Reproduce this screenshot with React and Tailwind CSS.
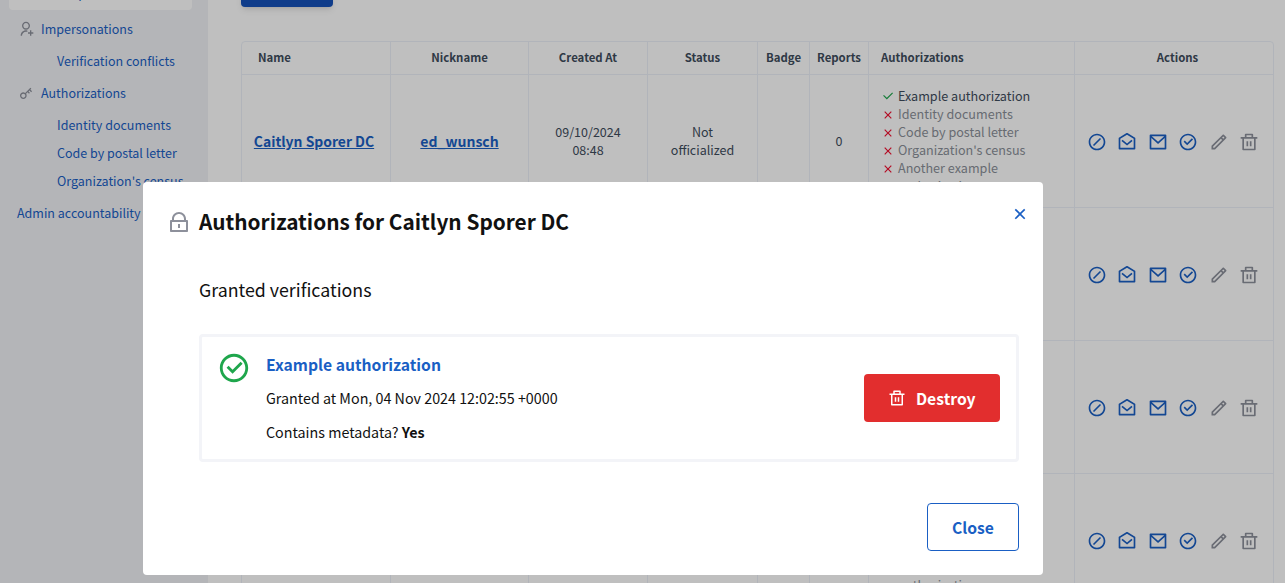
import React from 'react';
import {
  RiCheckLine,
  RiCheckboxCircleLine,
  RiCloseLine,
  RiDeleteBinLine,
  RiForbid2Line,
  RiGroupLine,
  RiKey2Line,
  RiLockLine,
  RiMailLine,
  RiMailOpenLine,
  RiPencilLine,
  RiUserAddLine,
} from 'react-icons/ri';

const font = { fontFamily: '"Noto Sans CJK SC", "Noto Sans", sans-serif' };

const columns = 'grid grid-cols-[149px_138px_119px_110px_52px_59px_206px_199px]';
const cell = 'flex items-center justify-center border-r border-[#edf1f9] text-center text-[12.5px] text-[#3e4c5c]';

const headers = ['Name', 'Nickname', 'Created At', 'Status', 'Badge', 'Reports', 'Authorizations', 'Actions'];
const denied = ['Identity documents', 'Code by postal letter', "Organization's census", 'Another example authorization'];

const Row = () => (
  <div className={`${columns} h-[133px] border-t border-[#edf1f9]`}>
    <div className={`${cell} pr-[4px]`}>
      <a className="text-[13.9px] font-semibold text-[#1a5fc4] underline">Caitlyn Sporer DC</a>
    </div>
    <div className={cell}>
      <a className="text-[14px] font-semibold text-[#1a5fc4] underline">ed_wunsch</a>
    </div>
    <div className={`${cell} leading-[18px]`}>09/10/2024<br />08:48</div>
    <div className={`${cell} leading-[18px]`}>Not<br />officialized</div>
    <div className={cell}></div>
    <div className={cell}>0</div>
    <div className="flex flex-col justify-center border-r border-[#edf1f9] pl-3 pr-1 text-[12.6px] leading-[18px]">
      <div className="flex items-center gap-[3px] text-[#3e4c5c]">
        <RiCheckLine className="h-[14px] w-[14px] shrink-0 text-[#1fa64c]" />
        Example authorization
      </div>
      {denied.map((name) => (
        <div key={name} className="flex items-start gap-[3px] text-[#8a8f98]">
          <RiCloseLine className="mt-[3px] h-[14px] w-[14px] shrink-0 text-[#f01030]" />
          {name}
        </div>
      ))}
    </div>
    <div className="flex items-center justify-center gap-[10.6px] pr-[3px] pt-[1px] text-[20px]">
      <RiForbid2Line className="text-[#1a5fc4]" />
      <RiMailOpenLine className="text-[#1a5fc4]" />
      <RiMailLine className="text-[#1a5fc4]" />
      <RiCheckboxCircleLine className="text-[#1a5fc4]" />
      <RiPencilLine className="text-[#8d909b]" />
      <RiDeleteBinLine className="text-[#8d909b]" />
    </div>
  </div>
);

const NavItem = ({ icon: Icon, label, className }) => (
  <a className={`flex h-7 items-center gap-[7px] pl-[18px] text-[12.5px] text-[#1a5fc4] ${className}`}>
    <Icon className="h-4 w-4 text-[#8d909b]" />
    {label}
  </a>
);

const SubItem = ({ label, className = '' }) => (
  <a className={`flex h-7 items-center pl-[57px] text-[12.5px] text-[#1a5fc4] ${className}`}>{label}</a>
);

export default function App() {
  return (
    <div className="relative h-[583px] w-[1285px] overflow-hidden bg-white" style={font}>
      <div className="-mt-5 flex">
        {/* Sidebar */}
        <aside className="h-[640px] w-[208px] shrink-0 bg-[#f1f2f6]">
          <a className="ml-[9px] flex h-[30px] w-[183px] items-center gap-[7px] rounded-b bg-white pb-[4px] pl-[9px] text-[12.5px] text-[#1a5fc4]">
            <RiGroupLine className="h-[14px] w-4 text-[#8d909b]" />
            Participants
          </a>
          <NavItem icon={RiUserAddLine} label="Impersonations" className="mt-[5px]" />
          <SubItem label="Verification conflicts" className="mt-1" />
          <NavItem icon={RiKey2Line} label="Authorizations" className="mt-1" />
          <SubItem label="Identity documents" className="mt-1" />
          <SubItem label="Code by postal letter" />
          <SubItem label="Organization's census" />
          <a className="mt-1 flex h-7 items-center pl-[17px] text-[12.5px] text-[#1a5fc4]">Admin accountability</a>
        </aside>

        {/* Main */}
        <main className="flex-1 pl-[33px]">
          <div className="h-[27px] w-[92px] rounded-b bg-[#1550b8] shadow-md"></div>
          <div className="mt-[34px] w-[1033px] rounded-t border border-[#edf1f9]">
            <div className={`${columns} h-[32px]`}>
              {headers.map((h, i) => (
                <div
                  key={h}
                  className={`flex items-center border-r border-[#edf1f9] pb-[1px] text-[11.4px] font-semibold text-[#3e4c5c] last:border-r-0 ${
                    i === 0 ? 'pl-4' : i === 6 ? 'pl-3' : i === 7 ? 'justify-center pl-[6px]' : 'justify-center'
                  }`}
                >
                  {h}
                </div>
              ))}
            </div>
            <Row />
            <Row />
            <Row />
            <Row />
          </div>
        </main>
      </div>

      {/* Overlay */}
      <div className="absolute inset-0 bg-black/25"></div>

      {/* Modal */}
      <div className="absolute left-[143px] top-[182px] flex h-[393px] w-[900px] flex-col rounded bg-white pl-[56px] pr-6">
        <div className="flex items-center pt-6">
          <RiLockLine className="-ml-[32px] mr-[8px] h-6 w-6 text-[#8d909b]" />
          <h2 className="-mt-[1px] flex-1 text-[20.8px] font-semibold leading-8 text-[#111]">Authorizations for Caitlyn Sporer DC</h2>
          <RiCloseLine className="-mr-[11px] -mt-4 h-5 w-5 text-[#1a5fc4]" />
        </div>
        <h3 className="mt-[38px] text-[17.8px] leading-7 text-[#111]">Granted verifications</h3>
        <div className="mt-[31px] flex h-[128px] w-[820px] items-center rounded border-[3px] border-[#f3f4f8] pl-[15px] pr-[16px]">
          <RiCheckboxCircleLine className="-mt-[60px] h-[34px] w-[34px] shrink-0 text-[#1fa64c]" />
          <div className="ml-[15px] flex-1 text-[14.3px] text-[#111]">
            <div className="pt-[1px] text-[15.7px] font-semibold leading-6 text-[#1a5fc4]">Example authorization</div>
            <div className="mt-[9px] leading-6">Granted at Mon, 04 Nov 2024 12:02:55 +0000</div>
            <div className="mt-[10px] leading-6">
              Contains metadata? <strong className="font-bold">Yes</strong>
            </div>
          </div>
          <button className="flex h-12 w-[136px] items-center justify-center gap-[9.5px] rounded-sm bg-[#e22e2e] pt-[1px] text-[15.7px] font-semibold text-white">
            <RiDeleteBinLine className="-mt-[2px] h-[18px] w-[18px]" />
            Destroy
          </button>
        </div>
        <div className="mt-[41px] flex w-[820px] justify-end">
          <button className="h-12 w-[92px] rounded-sm border border-[#1a5fc4] pt-[1px] text-[15.7px] font-semibold text-[#1a5fc4]">
            Close
          </button>
        </div>
      </div>
    </div>
  );
}
